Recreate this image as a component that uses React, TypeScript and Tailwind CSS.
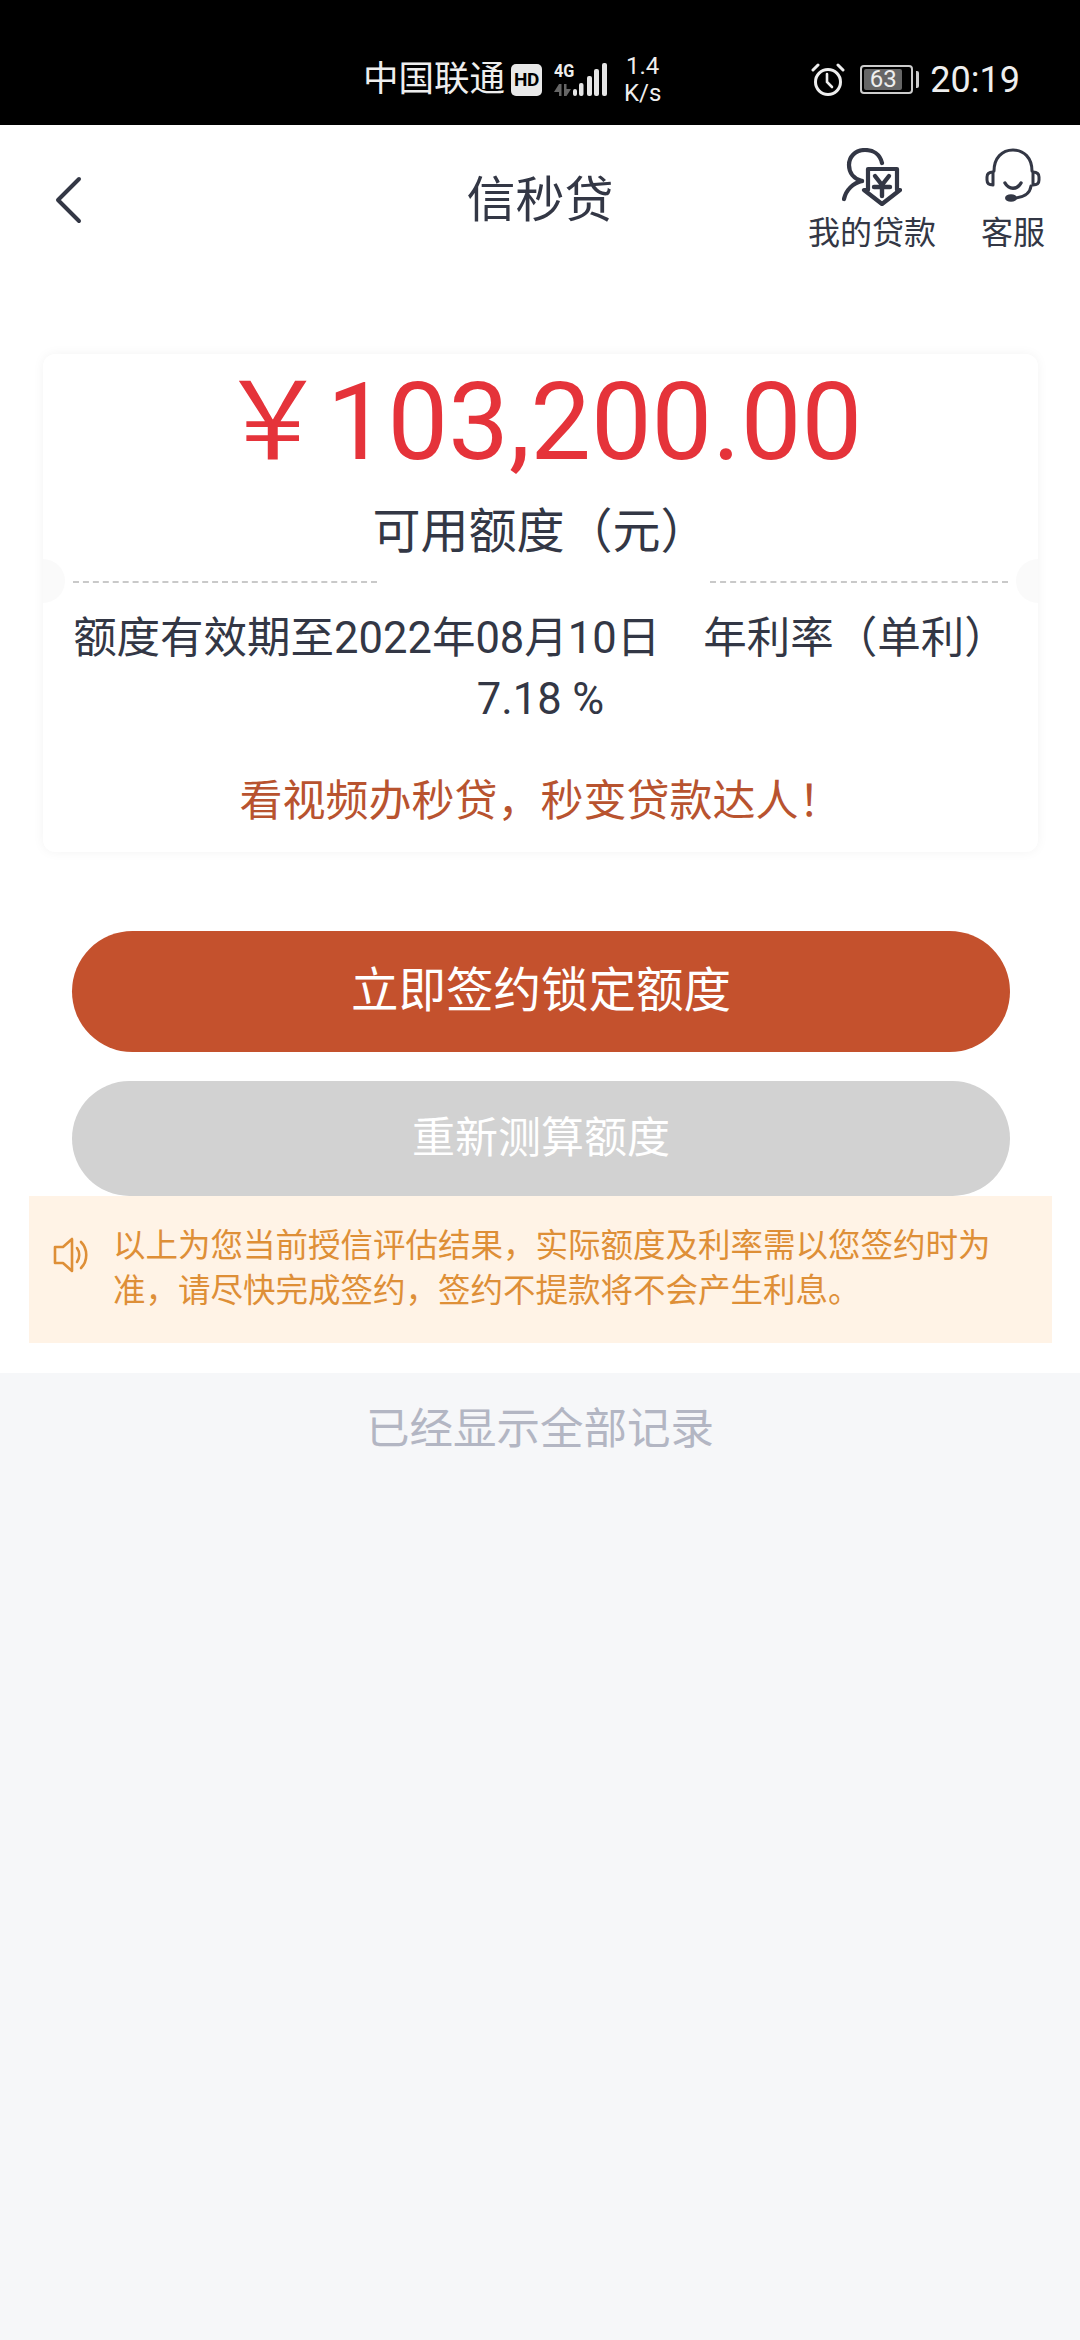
import React from 'react';

const LoanIcon = () => (
  <svg width="60" height="58" viewBox="0 0 60 58" fill="none" stroke="#333745" strokeWidth="4.2" strokeLinecap="round" strokeLinejoin="round">
    <path d="M40 15C38 6 31 2 23 2C13 2 7 9 7 17C7 25 12 31 20 33" />
    <path d="M2 51C4 42 11 35 20 33" />
    <path d="M26 21H55V42H58L40 56L22 42H26Z" />
    <path d="M33 28L40 37L47 28M40 37V48M32 39H48" strokeWidth="4.4" />
  </svg>
);

const HeadsetIcon = () => (
  <svg width="56" height="56" viewBox="0 0 56 56" fill="none" stroke="#333745" strokeWidth="3" strokeLinecap="round" strokeLinejoin="round">
    <path d="M9 23C9 10 17 2 28 2C39 2 47 10 47 23" />
    <path d="M8 24C4 24 2 26 2 29V32C2 35 4 37 8 37Z" />
    <path d="M48 24C52 24 54 26 54 29V32C54 35 52 37 48 37Z" />
    <path d="M20 35C24 42 32 42 36 35" strokeWidth="3.4" />
    <path d="M46 38C45 46 38 50 28 50" />
    <ellipse cx="26" cy="50" rx="6" ry="3.8" fill="#333745" stroke="none" />
  </svg>
);

const SpeakerIcon = () => (
  <svg width="36" height="36" viewBox="0 0 36 36" fill="none" stroke="#de8f37" strokeWidth="2.6" strokeLinejoin="round" strokeLinecap="round">
    <path d="M2 10H10L19 2V34L10 26H2Z" />
    <path d="M24 11C27 15 27 21 24 25" />
    <path d="M28 5C35 12 35 24 28 31" />
  </svg>
);

const SignalBars = () => (
  <svg width="34" height="33" viewBox="0 0 34 33" fill="#e5e5e5">
    <rect x="0" y="26" width="4" height="7" rx="2" />
    <rect x="6" y="20" width="4.5" height="13" rx="2" />
    <rect x="14" y="13" width="5" height="20" rx="2" />
    <rect x="21" y="6" width="5" height="27" rx="2" />
    <rect x="29" y="0" width="5" height="33" rx="2" />
  </svg>
);

const DataArrows = () => (
  <svg width="17" height="12" viewBox="0 0 17 12" fill="#666666">
    <path d="M5 0V12H7.5V0ZM5 0L0 8H5Z" />
    <path d="M10 0V12H12.5V0ZM12.5 12L17 5H12.5Z" />
  </svg>
);

const AlarmIcon = () => (
  <svg width="34" height="34" viewBox="0 0 34 34" fill="none" stroke="#eeeeee" strokeWidth="3" strokeLinecap="round">
    <circle cx="17" cy="19" r="12.5" />
    <path d="M16 11V19L21 24" strokeWidth="2.6" />
    <path d="M2 7L7 2M32 7L27 2" />
  </svg>
);

const Dashes = ({ className }: { className: string }) => (
  <div className={`h-0 border-t-2 border-dashed border-[#c9c9c9] ${className}`} />
);

export default function App() {
  return (
    <div className="w-[1080px] h-[2340px] flex flex-col bg-[#f6f7f9] overflow-hidden font-['Roboto','Noto_Sans_CJK_SC',sans-serif] text-[#333745]">
      {/* status bar */}
      <div className="h-[125px] bg-black flex items-center pt-[34px] pl-[363px] pr-[60px] text-[#eeeeee] shrink-0">
        <span className="w-[144px] text-[35.5px] leading-none whitespace-nowrap">中国联通</span>
        <span className="ml-[4px] w-[31px] h-[32px] rounded-[5px] bg-[#e8e8e8] text-black text-[19px] font-bold leading-[32px] text-center tracking-tight">HD</span>
        <div className="ml-[12px] w-[19px] h-[33px] flex flex-col justify-between">
          <span className="text-[18px] font-bold leading-[16px] block scale-x-90 origin-left whitespace-nowrap">4G</span>
          <DataArrows />
        </div>
        <SignalBars />
        <div className="ml-[17px] flex flex-col items-center text-[24px] leading-[27px]">
          <span>1.4</span>
          <span>K/s</span>
        </div>
        <div className="ml-auto flex items-center">
          <AlarmIcon />
          <div className="ml-[15px] w-[53px] h-[29px] border-2 border-[#cccccc] rounded-[4px] p-[2px] flex">
            <div className="w-[38px] h-full bg-[#666666] rounded-[2px] text-[24px] leading-[21px] text-center">63</div>
          </div>
          <div className="ml-[3px] w-[3px] h-[17px] rounded-r-[2px] bg-[#cccccc]" />
          <span className="ml-[11px] text-[36px] leading-none">20:19</span>
        </div>
      </div>

      <div className="bg-white h-[1248px] shrink-0 flex flex-col">
        {/* nav */}
        <div className="h-[229px] shrink-0 grid grid-cols-[1fr_auto_1fr] items-start">
          <div className="pl-[50px] pt-[50px]">
            <svg width="40" height="50" viewBox="0 0 40 50" fill="none" stroke="#333745" strokeWidth="4" strokeLinecap="round" strokeLinejoin="round">
              <path d="M29 4L8 25L29 46" />
            </svg>
          </div>
          <div className="text-[49px] leading-[60px] pt-[46px]">信秒贷</div>
          <div className="flex justify-end pr-[35px] pt-[23px] gap-[45px]">
            <div className="flex flex-col items-center">
              <LoanIcon />
              <span className="text-[32px] leading-[44px] mt-[5px]">我的贷款</span>
            </div>
            <div className="flex flex-col items-center">
              <HeadsetIcon />
              <span className="text-[32px] leading-[44px] mt-[7px]">客服</span>
            </div>
          </div>
        </div>

        {/* quota card */}
        <div className="relative mx-[43px] w-[995px] h-[498px] shrink-0 bg-white rounded-[12px] shadow-[0_0_12px_rgba(0,0,0,0.05)] flex flex-col items-center">
          <div className="mt-[14px] text-[108px] leading-[108px] text-[#e5333a] whitespace-nowrap">{'\uFFE5103,200.00'}</div>
          <div className="mt-[26px] text-[48px] leading-[60px]">{'可用额度\uFF08元\uFF09'}</div>
          <div className="mt-[19px] w-full flex justify-between px-[30px]">
            <Dashes className="w-[304px]" />
            <Dashes className="w-[298px]" />
          </div>
          <div className="mt-[25px] w-[1024px] text-center text-[43.5px] leading-[61px]">
            {'额度有效期至2022年08月10日\u00A0\u00A0\u00A0\u00A0年利率\uFF08单利\uFF09 7.18 %'}
          </div>
          <div className="mt-[41px] text-[43px] leading-[60px] text-[#b8532f]">{'看视频办秒贷\uFF0C秒变贷款达人\uFF01'}</div>
          <div className="absolute left-0 top-[205px] w-[22px] h-[44px] rounded-r-full bg-[#fafafa]" />
          <div className="absolute right-0 top-[205px] w-[22px] h-[44px] rounded-l-full bg-[#fafafa]" />
        </div>

        {/* buttons */}
        <div className="mt-[79px] ml-[72px] mr-[70px] h-[121px] rounded-full bg-[#c4512d] text-white text-[47.5px] flex items-center justify-center shrink-0">立即签约锁定额度</div>
        <div className="mt-[29px] ml-[72px] mr-[70px] h-[115px] rounded-full bg-[#d2d2d2] text-white text-[43px] flex items-center justify-center shrink-0">重新测算额度</div>

        {/* notice */}
        <div className="ml-[29px] mr-[28px] h-[147px] bg-[#fff3e6] flex items-start pt-[28px] pl-[24px] pr-[40px] text-[#de8f37] shrink-0">
          <div className="pt-[13px] shrink-0"><SpeakerIcon /></div>
          <p className="ml-[24px] text-[32.5px] leading-[45px]">{'以上为您当前授信评估结果\uFF0C实际额度及利率需以您签约时为准\uFF0C请尽快完成签约\uFF0C签约不提款将不会产生利息。'}</p>
        </div>
      </div>

      <div className="pt-[27px] text-center text-[43.5px] leading-[60px] text-[#b3b6c3]">已经显示全部记录</div>
    </div>
  );
}
